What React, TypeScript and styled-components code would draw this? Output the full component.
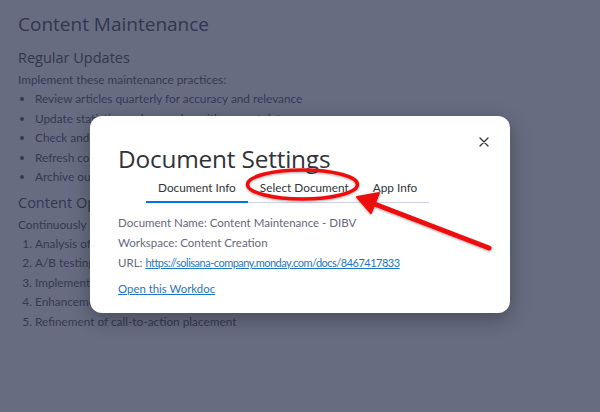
import React from 'react';
import styled, { createGlobalStyle } from 'styled-components';

const COLORS = {
    text: '#555866',
    heading: '#4a4d5c',
    modalText: '#323338',
    secondary: '#676879',
    blue: '#0073ea',
    link: '#1f76c2',
    divider: '#d0d4e4',
    red: '#ee1111',
};

const GlobalStyle = createGlobalStyle`
    html, body {
        margin: 0;
        padding: 0;
        background: #ffffff;
        font-family: 'Lato', 'Noto Sans', sans-serif;
    }
    * { box-sizing: border-box; }
`;

const Page = styled.div`
    width: 600px;
    height: 412px;
    overflow: hidden;
    position: relative;
    padding: 10px 18px;
    color: ${COLORS.text};
`;

const DocTitle = styled.h1`
    margin: 0 0 10px;
    font-family: 'Open Sans', sans-serif;
    font-weight: 400;
    font-size: 19px;
    line-height: 28px;
    color: ${COLORS.heading};
`;

const SectionTitle = styled.h2`
    margin: 0 0 3px;
    font-family: 'Open Sans', sans-serif;
    font-weight: 400;
    font-size: 14.5px;
    line-height: 20px;
    color: ${COLORS.heading};
`;

const Para = styled.p`
    margin: 0;
    font-size: 11.8px;
    line-height: 18px;
`;

const List = styled.ul<{ $ordered?: boolean }>`
    margin: 0 0 6px;
    padding-left: 17px;
    list-style: ${(p) => (p.$ordered ? 'decimal' : 'disc')};
    font-size: 11.8px;
    line-height: 19.5px;
`;

const Backdrop = styled.div`
    position: absolute;
    inset: 0;
    background: rgba(38, 45, 74, 0.7);
    display: flex;
    justify-content: center;
    padding-top: 116px;
`;

const Modal = styled.div`
    position: relative;
    width: 420px;
    height: 197px;
    background: #ffffff;
    border-radius: 12px;
    box-shadow: 0 6px 20px rgba(0, 0, 0, 0.3);
    padding: 27px 28px 0;
    color: ${COLORS.modalText};
`;

const CloseButton = styled.button`
    position: absolute;
    top: 16px;
    right: 16px;
    width: 20px;
    height: 20px;
    padding: 0;
    border: none;
    background: none;
    display: flex;
    align-items: center;
    justify-content: center;
    color: ${COLORS.modalText};
`;

const ModalTitle = styled.h1`
    margin: 0;
    font-family: 'Open Sans', sans-serif;
    font-weight: 500;
    font-size: 24.4px;
    line-height: 32px;
    letter-spacing: -0.2px;
`;

const Tabs = styled.div`
    display: inline-flex;
    margin-left: 28px;
    border-bottom: 1px solid ${COLORS.divider};
`;

const Tab = styled.div<{ $active?: boolean }>`
    padding: 0 12px;
    height: 27px;
    line-height: 26px;
    font-size: 11.8px;
    white-space: nowrap;
    color: ${COLORS.modalText};
    position: relative;
    &::after {
        content: '';
        display: ${(p) => (p.$active ? 'block' : 'none')};
        position: absolute;
        left: 0;
        right: 0;
        bottom: -1px;
        height: 2px;
        background: ${COLORS.blue};
    }
`;

const InfoList = styled.div`
    margin-top: 10px;
    display: flex;
    flex-direction: column;
`;

const InfoLine = styled.div`
    font-size: 11.5px;
    line-height: 20px;
    white-space: nowrap;
    color: ${COLORS.secondary};
`;

const Link = styled.a`
    color: ${COLORS.link};
    text-decoration: underline;
`;

const UrlLink = styled(Link)`
    font-size: 11px;
    letter-spacing: -0.5px;
`;

const OpenLink = styled(Link)`
    display: inline-block;
    margin-top: 6px;
    font-size: 11.4px;
    line-height: 20px;
`;

const Annotation = styled.svg`
    position: absolute;
    inset: 0;
    pointer-events: none;
`;

export default function App() {
    return (
        <>
            <GlobalStyle />
            <Page>
                <DocTitle>Content Maintenance</DocTitle>
                <SectionTitle>Regular Updates</SectionTitle>
                <Para>Implement these maintenance practices:</Para>
                <List>
                    <li>Review articles quarterly for accuracy and relevance</li>
                    <li>Update statistics and examples with current data</li>
                    <li>Check and fix broken links and references</li>
                    <li>Refresh content to reflect industry changes</li>
                    <li>Archive outdated or redundant articles</li>
                </List>
                <SectionTitle>Content Optimization</SectionTitle>
                <Para>Continuously improve content based on performance data:</Para>
                <List as="ol" $ordered>
                    <li>Analysis of user engagement metrics</li>
                    <li>A/B testing of headlines and introductions</li>
                    <li>Implementation of SEO recommendations</li>
                    <li>Enhancement of readability and structure</li>
                    <li>Refinement of call-to-action placement</li>
                </List>

                <Backdrop>
                    <Modal>
                        <CloseButton aria-label="Close">
                            <svg width="10" height="10" viewBox="0 0 10 10">
                                <path d="M1 1 L9 9 M9 1 L1 9" stroke="currentColor" strokeWidth="1.3" strokeLinecap="round" />
                            </svg>
                        </CloseButton>
                        <ModalTitle>Document Settings</ModalTitle>
                        <Tabs>
                            <Tab $active>Document Info</Tab>
                            <Tab>Select Document</Tab>
                            <Tab>App Info</Tab>
                        </Tabs>
                        <InfoList>
                            <InfoLine>Document Name: Content Maintenance - DIBV</InfoLine>
                            <InfoLine>Workspace: Content Creation</InfoLine>
                            <InfoLine>
                                URL: <UrlLink href="#">https://solisana-company.monday.com/docs/8467417833</UrlLink>
                            </InfoLine>
                        </InfoList>
                        <OpenLink href="#">Open this Workdoc</OpenLink>
                    </Modal>
                </Backdrop>

                <Annotation width="600" height="412" viewBox="0 0 600 412">
                    <defs>
                        <filter id="shadow" x="-20%" y="-20%" width="140%" height="140%">
                            <feDropShadow dx="0" dy="1" stdDeviation="1.2" floodColor="#000" floodOpacity="0.35" />
                        </filter>
                    </defs>
                    <g filter="url(#shadow)">
                        <ellipse cx="302.5" cy="184.5" rx="55" ry="14.5" fill="none" stroke={COLORS.red} strokeWidth="3.5" />
                        <path d="M489 248 L372 203" stroke={COLORS.red} strokeWidth="5" strokeLinecap="round" />
                        <path d="M357 197 L379 193 L371 213 Z" fill={COLORS.red} stroke={COLORS.red} strokeWidth="2" strokeLinejoin="round" />
                    </g>
                </Annotation>
            </Page>
        </>
    );
}
